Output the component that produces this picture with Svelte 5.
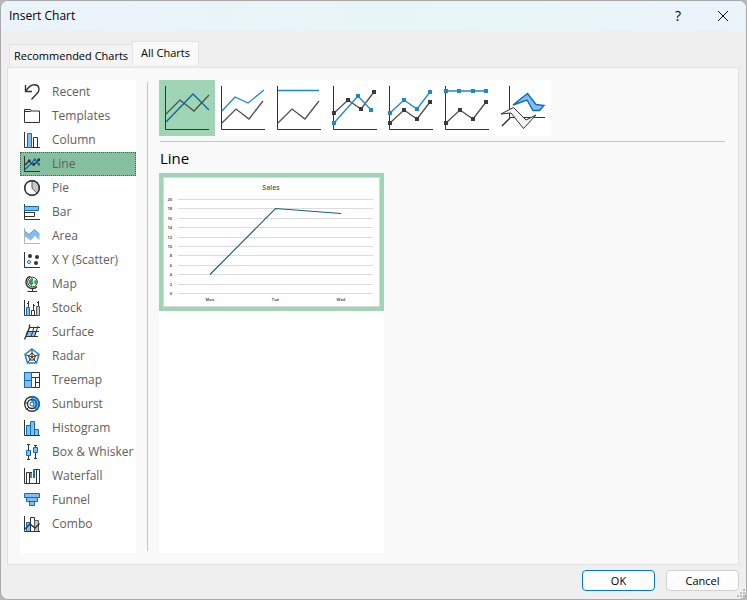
<script lang="ts">
  type Point = [number, number];

  type Series = {
    tone: 'dark' | 'blue';
    points: Point[];
  };

  type Subtype = {
    name: string;
    markers?: boolean;
    series: Series[];
  };

  const categories = [
    'Recent',
    'Templates',
    'Column',
    'Line',
    'Pie',
    'Bar',
    'Area',
    'X Y (Scatter)',
    'Map',
    'Stock',
    'Surface',
    'Radar',
    'Treemap',
    'Sunburst',
    'Histogram',
    'Box & Whisker',
    'Waterfall',
    'Funnel',
    'Combo'
  ];

  const rising: Point[] = [[7, 43], [21, 29], [34, 39], [48, 21]];
  const risingMarked: Point[] = [[7, 43], [21, 30], [34, 39], [47, 22]];

  const subtypes: Subtype[] = [
    {
      name: 'Line',
      series: [
        { tone: 'dark', points: [[7, 34], [21, 20], [35, 31], [50, 15]] },
        { tone: 'blue', points: [[7, 42], [34, 14], [50, 30]] }
      ]
    },
    {
      name: 'Stacked Line',
      series: [
        { tone: 'dark', points: rising },
        { tone: 'blue', points: [[7, 31], [20, 17], [33, 23], [49, 10]] }
      ]
    },
    {
      name: '100% Stacked Line',
      series: [
        { tone: 'dark', points: rising },
        { tone: 'blue', points: [[7, 10.5], [48, 10.5]] }
      ]
    },
    {
      name: 'Line with Markers',
      markers: true,
      series: [
        { tone: 'dark', points: [[7, 33], [21, 20], [34, 29], [47, 12]] },
        { tone: 'blue', points: [[7, 43], [31, 16], [44, 30]] }
      ]
    },
    {
      name: 'Stacked Line with Markers',
      markers: true,
      series: [
        { tone: 'dark', points: risingMarked },
        { tone: 'blue', points: [[7, 33], [21, 20], [34, 29], [47, 12]] }
      ]
    },
    {
      name: '100% Stacked Line with Markers',
      markers: true,
      series: [
        { tone: 'dark', points: risingMarked },
        { tone: 'blue', points: [[7, 11], [20, 11], [34, 11], [47, 11]] }
      ]
    },
    { name: '3-D Line', series: [] }
  ];

  const sales = [
    { day: 'Mon', value: 4 },
    { day: 'Tue', value: 18 },
    { day: 'Wed', value: 17 }
  ];
  const ticks = [0, 2, 4, 6, 8, 10, 12, 14, 16, 18, 20];

  let category = $state('Line');
  let subtype = $state('Line');
  let tab = $state('all');

  const toPath = (points: Point[]) => points.map((p) => p.join(',')).join(' ');
  const chartX = (i: number) => 47 + i * 65.5;
  const chartY = (v: number) => Math.round(116 - v * 4.7) + 0.5;
</script>

{#snippet icon(name: string)}
  <svg class="icon" viewBox="0 0 16 16" aria-hidden="true">
    {#if name === 'Recent'}
      <path class="ln heavy" d="M1.5 1v6.500H8M1.500 7.500C4 4 6 .8 10 .8c3 0 5 2 5 4.700 0 2-1 3-2.200 4.200L7.500 15.500" />
    {:else if name === 'Templates'}
      <path class="ln" d="M.5 14.500v-13h6l1 1.500h8v11.500zM.5 3.500h6l1-.5" />
    {:else if name === 'Column'}
      <path class="ln" d="M.5 0v15.500H16M9.500 15.500v-10h4v10" />
      <path class="bl" d="M3.500 1.500h4v14h-4z" />
    {:else if name === 'Line'}
      <path class="ln" d="M.5 0v15.500H16" />
      <path class="ln heavy" d="M1 9l4-4 4.500 4L15 4" />
      <path class="bs heavy" d="M1 13.500L11 3.500l4 4.500" />
      <path class="dot" d="M4 3.500h2.500V6H4zM8.500 7h2.500v2.500H8.500zM13.500 2.500H16V5h-2.500z" />
      <path class="bdot" d="M9.500 2.500H12V5H9.500zM13.500 7H16v2.500h-2.500zM6 6.500h2.500V9H6z" />
    {:else if name === 'Pie'}
      <circle class="ln white" cx="8" cy="8" r="7.300" />
      <path class="gr" d="M8 .7V8l5 5.300A7.300 7.300 0 0 0 8 .7z" />
      <circle class="ln heavy" cx="8" cy="8" r="7.300" />
    {:else if name === 'Bar'}
      <path class="ln" d="M.5 0v15.500H16M.5 8.500h10v4H.5" />
      <path class="bl" d="M.5 2.500h14v4H.5z" />
    {:else if name === 'Area'}
      <path class="axis-soft" d="M.5 0v15.500H16" />
      <path class="fill-bl" d="M.5 3L5 6.500l5.500-5L15.500 6v6L11 8l-4.500 4.500L.5 8z" />
      <path class="bs thin" d="M.5 3L5 6.500l5.500-5L15.500 6" />
    {:else if name === 'X Y (Scatter)'}
      <path class="ln" d="M.5 0v15.500H16" />
      <circle class="dot" cx="6" cy="4" r="2" />
      <circle class="dot" cx="13" cy="5" r="2" />
      <circle class="dot" cx="12" cy="11" r="2" />
      <circle class="bs white" cx="5" cy="10" r="1.500" />
    {:else if name === 'Map'}
      <circle class="ln white" cx="8.500" cy="6" r="4.800" />
      <path class="green" d="M5 4.500L8 2l1.500 1-1 2.500 1 1.500L7.500 10 5 7.500zM10.500 4.500l2-.5.500 2-1.500 2.500-1.500-1.500z" />
      <path class="ln heavy" d="M6.500.5C3.500 1 2 3.500 2 6.300c0 3.500 3 6.200 6.500 6.200 2 0 3.500-.7 4.500-2" />
      <path class="ln" d="M8.500 13v2M3.500 15.500h9.500" />
    {:else if name === 'Stock'}
      <path class="ln" d="M.5 0v15.500H16M4.500 1v6M3 3.500h1.500M9.500 4v6M9.500 5.500H11M14.500 1v5M13 2.500h1.500" />
      <path class="bl" d="M2.500 7.500h3v8h-3z" />
      <path class="ln white" d="M7.500 10.500h3v5h-3z" />
      <path class="gr" d="M12.500 6.500h3v9h-3z" />
    {:else if name === 'Surface'}
      <path class="fill-bl" d="M4 7.500h9l-2 5H2z" />
      <path class="ln heavy" d="M5.500.5v3L.5 15.500M3.500 7.500L2 12" />
      <path class="ln" d="M5 3.500h11M3.500 7.500h11.500M2 12.500h12M10 3.500L7 12.500M14 2l-3.500 10.500" />
    {:else if name === 'Radar'}
      <path class="ln" d="M8 1v8M1 6.500L8 9l7-2.500M3.500 15L8 9l4.500 6" />
      <path class="ln thick" d="M8 5l3.500 3-1.500 4H6L4.500 8z" />
      <path class="bs ring" d="M8 1l7 5.500-2.500 8.500h-9L1 6.500z" />
    {:else if name === 'Treemap'}
      <path class="bl" d="M.5.5h7v8h-7zM.5 8.500h7v7h-7z" />
      <path class="ln white" d="M7.500.5h8v15h-8zM7.500 5.500h8M11.500 5.500v10M11.500 10.500h4" />
      <path class="bs" d="M.5.5h7v15h-7z" />
    {:else if name === 'Sunburst'}
      <circle class="ln white heavy" cx="8" cy="8" r="7.300" />
      <path class="bl" d="M8 .7a7.300 7.300 0 0 1 4 13.200L8 8z" />
      <circle class="ln heavy" cx="8" cy="8" r="4.500" />
      <path class="bs heavy" d="M8 3.500a4.500 4.500 0 0 1 3 8M8 .7a7.300 7.300 0 0 1 4 13.200" />
      <circle class="bs white" cx="8" cy="8" r="2" />
      <path class="ln" d="M1 7h2.500M4.500 11.500L3 13" />
    {:else if name === 'Histogram'}
      <path class="bl" d="M2.500 5.500h4v10h-4zM6.500 1.500h4v14h-4zM10.500 9.500h4v6h-4z" />
      <path class="ln" d="M.5 0v15.500H16" />
    {:else if name === 'Box & Whisker'}
      <path class="ln" d="M3 .5h3M4.500.5v14.500M3 15.500h3M10 1.500h3M11.500 1.500v13M10 14.500h3" />
      <path class="bl" d="M2.500 6.500h4v5h-4zM9.500 3.500h4v5h-4z" />
    {:else if name === 'Waterfall'}
      <path class="ln white" d="M2.500 4.500h3v11h-3zM12.500 1.500h3v14h-3z" />
      <path class="gray" d="M6 4h2v6H6z" />
      <path class="bdot" d="M9 1h2v9H9z" />
      <path class="ln" d="M.5 0v15.500H16M5.500 4.500H8M11 1.500h4" />
    {:else if name === 'Funnel'}
      <path class="bl" d="M.5 1.500h15v4H.5zM2.500 5.500h11v4h-11zM5.500 9.500h5v4h-5z" />
    {:else if name === 'Combo'}
      <path class="bl" d="M2.500 6.500h4v9h-4z" />
      <path class="ln white" d="M6.500 1.500h4v14h-4z" />
      <path class="gr" d="M10.500 4.500h4v11h-4z" />
      <path class="ln" d="M.5 0v15.500H16" />
      <path class="ln heavy" d="M1 13l5-5 5 4 4.500-4.500" />
    {/if}
  </svg>
{/snippet}

<div class="dialog" role="dialog" aria-labelledby="title">
  <header>
    <h1 id="title">Insert Chart</h1>
    <button type="button" class="caption" aria-label="Help">?</button>
    <button type="button" class="caption" aria-label="Close">
      <svg class="close" viewBox="0 0 12 12" aria-hidden="true">
        <path d="M1 1l10 10M11 1L1 11" />
      </svg>
    </button>
  </header>

  <div class="body">
    <div class="tabs" role="tablist">
      <button type="button" role="tab" aria-selected={tab === 'recommended'} onclick={() => (tab = 'recommended')}>
        Recommended Charts
      </button>
      <button type="button" role="tab" aria-selected={tab === 'all'} onclick={() => (tab = 'all')}>
        All Charts
      </button>
    </div>

    <div class="panel">
      <nav class="categories" aria-label="Chart types">
        {#each categories as name (name)}
          <button
            type="button"
            class="category"
            class:selected={category === name}
            aria-pressed={category === name}
            onclick={() => (category = name)}
          >
            {@render icon(name)}
            {name}
          </button>
        {/each}
      </nav>

      <div class="divider"></div>

      <section class="detail">
        <div class="subtypes">
          {#each subtypes as item (item.name)}
            <button
              type="button"
              class="subtype"
              class:selected={subtype === item.name}
              aria-label={item.name}
              aria-pressed={subtype === item.name}
              onclick={() => (subtype = item.name)}
            >
              <svg viewBox="0 0 56 56" aria-hidden="true">
                {#if item.series.length}
                  <path class="ln" d="M6.500 6v43.500H50" />
                {:else}
                  <path class="ln" d="M14.500 6v31.500H50" />
                  <path class="bl heavy" d="M18 25l14.500-11.500 8.500 11 8 1-4.500 5h-6.500L32 20z" />
                  <path class="ln ribbon" d="M6 34l12.500-6.500L31 40l10-5-12.500 13.500L16 33z" />
                  <path class="ln heavy" d="M7 46l8-8" />
                {/if}
                {#each item.series as s}
                  <polyline class={s.tone} points={toPath(s.points)} />
                  {#if item.markers}
                    {#each s.points as [x, y]}
                      <rect class={`mark ${s.tone}`} x={x - 2} y={y - 2} width="4" height="4" />
                    {/each}
                  {/if}
                {/each}
              </svg>
            </button>
          {/each}
        </div>

        <h2>{subtype}</h2>

        <div class="previews">
          <button type="button" class="preview" aria-label="Sales, line chart">
            <svg viewBox="0 0 217 130" aria-hidden="true">
              <rect class="frame" x="0.5" y="0.5" width="216" height="129" />
              <text class="chart-title" x="108" y="13">Sales</text>
              {#each ticks as t (t)}
                <line class="grid" x1="15" x2="210" y1={chartY(t)} y2={chartY(t)} />
                <text class="tick end" x="9" y={chartY(t) + 1}>{t}</text>
              {/each}
              {#each sales as { day }, i (day)}
                <text class="tick" x={chartX(i)} y="124">{day}</text>
              {/each}
              <polyline class="trend" points={sales.map((s, i) => `${chartX(i)},${chartY(s.value)}`).join(' ')} />
            </svg>
          </button>
        </div>
      </section>
    </div>

    <footer>
      <button type="button" class="action default">OK</button>
      <button type="button" class="action">Cancel</button>
    </footer>
  </div>

  <svg class="grip" viewBox="0 0 9 9" aria-hidden="true">
    <path d="M6 0h2v2H6zM3 3h2v2H3zM6 3h2v2H6zM0 6h2v2H0zM3 6h2v2H3zM6 6h2v2H6z" />
  </svg>
</div>

<style>
  :global(body) {
    margin: 0;
    background: #b8b8b8;
  }

  * {
    box-sizing: border-box;
  }

  button {
    margin: 0;
    padding: 0;
    border: 0;
    background: none;
    color: inherit;
    font: inherit;
  }

  h1,
  h2 {
    margin: 0;
    font-weight: 400;
  }

  .dialog {
    position: relative;
    display: flex;
    flex-direction: column;
    min-height: 100vh;
    border: 1px solid #a9a9a9;
    border-radius: 8px;
    overflow: hidden;
    background: #efefef;
    color: #000;
    font: 12px/16px 'Open Sans', 'Segoe UI', sans-serif;
  }

  header {
    display: flex;
    align-items: center;
    height: 30px;
    padding: 0 8px;
    background: linear-gradient(90deg, #ebf3fb, #e8f5f6 50%, #e9f5f7 75%, #ebf3fb);
  }

  h1 {
    flex: 1;
    font-size: 12px;
  }

  .caption {
    display: grid;
    place-items: center;
    width: 30px;
    height: 30px;
    font-size: 14px;
  }

  .caption + .caption {
    margin-left: 15px;
  }

  .close {
    width: 12px;
    height: 12px;
    fill: none;
    stroke: #111;
  }

  .body {
    flex: 1;
    display: flex;
    flex-direction: column;
    padding: 10px 7px 8px 6px;
  }

  .tabs {
    display: flex;
    align-items: flex-end;
    height: 26px;
    padding: 0 2px 2px;
    font-size: 11px;
  }

  .tabs button {
    height: 21px;
    padding: 1px 4px 0;
    border: 1px solid #e4e4e4;
    border-width: 1px 0 0 1px;
    background: #f3f3f3;
    white-space: nowrap;
  }

  .tabs button[aria-selected='true'] {
    height: 24px;
    padding: 0 8px 1px;
    border-width: 1px 1px 0;
    background: #f9f9f9;
  }

  .panel {
    flex: 1;
    display: flex;
    gap: 11px;
    padding: 12px 12px 11px;
    border: 1px solid #e2e2e2;
    background: #f9f9f9;
  }

  .categories {
    flex: none;
    width: 116px;
    padding-bottom: 16px;
    background: #fff;
  }

  .category {
    display: flex;
    align-items: center;
    gap: 12px;
    width: 100%;
    height: 24px;
    padding: 0 3px;
    border: 1px solid transparent;
    color: #606060;
    text-align: left;
    white-space: nowrap;
  }

  .category.selected {
    border: 1px dotted #8a3a5c;
    background: #86bf9f;
  }

  .icon {
    flex: none;
    width: 16px;
    height: 16px;
  }

  .divider {
    width: 1px;
    margin: 2px 0;
    background: #c3c3c3;
  }

  .detail {
    flex: 1;
    display: flex;
    flex-direction: column;
    align-items: flex-start;
    min-width: 0;
  }

  .subtypes {
    display: flex;
    background: #fff;
  }

  .subtype {
    width: 56px;
    height: 56px;
  }

  .subtype.selected {
    background: #9fd5b5;
  }

  .subtype svg,
  .preview svg {
    display: block;
    width: 100%;
  }

  h2 {
    align-self: stretch;
    height: 32px;
    margin: 5px 1px 0;
    padding: 6px 0;
    border-top: 1px solid #c6c6c6;
    font-size: 15px;
    line-height: 20px;
  }

  .previews {
    flex: 1;
    width: 225px;
    background: #fff;
  }

  .preview {
    display: block;
    width: 100%;
    border: 4px solid #9fd5b5;
    background: #fff;
  }

  footer {
    display: flex;
    justify-content: flex-end;
    gap: 11px;
    padding-top: 5px;
    font-size: 11px;
  }

  .action {
    width: 73px;
    height: 21px;
    border: 1px solid #d0d0d0;
    border-radius: 4px;
    background: #fdfdfd;
  }

  .action.default {
    border-color: #0078d4;
  }

  .grip {
    position: absolute;
    right: 0;
    bottom: 1px;
    width: 9px;
    height: 9px;
    fill: #bdbdbd;
  }

  .ln {
    fill: none;
    stroke: #333;
  }

  .white {
    fill: #fff;
  }

  .gr {
    fill: #c8c8c8;
    stroke: #5a5a5a;
  }

  .bl {
    fill: #83beec;
    stroke: #0f6cb8;
  }

  .bs {
    fill: none;
    stroke: #0f6cb8;
  }

  .bs.white {
    fill: #fff;
  }

  .bs.ring {
    stroke: #1e7fc8;
    stroke-width: 1.5;
  }

  .heavy {
    stroke-width: 1.4;
  }

  .thin {
    stroke: #5b9bd0;
  }

  .fill-bl {
    fill: #83beec;
  }

  .axis-soft {
    fill: none;
    stroke: #b5b5b5;
  }

  .dot {
    fill: #333;
  }

  .gray {
    fill: #7a7a7a;
  }

  .bdot {
    fill: #0f6cb8;
  }

  .green {
    fill: #2f9e56;
  }

  .ribbon {
    fill: #f4f4f4;
  }

  polyline {
    fill: none;
    stroke-width: 1.3;
  }

  polyline.dark {
    stroke: #505050;
  }

  polyline.blue {
    stroke: #1e88cf;
  }

  .selected polyline.blue {
    stroke: #0f62a8;
  }

  .mark.dark {
    fill: #3b3b3b;
  }

  .mark.blue {
    fill: #1e88cf;
  }

  .frame {
    fill: #fff;
    stroke: #d9d9d9;
  }

  .grid {
    stroke: #dcdcdc;
  }

  polyline.trend {
    stroke: #156082;
    stroke-width: 1.1;
  }

  text {
    fill: #595959;
    font-family: 'Open Sans', 'Segoe UI', sans-serif;
    text-anchor: middle;
  }

  .chart-title {
    font-size: 7px;
    font-weight: 600;
  }

  .tick {
    font-size: 4px;
    font-weight: 700;
  }

  .tick.end {
    text-anchor: end;
  }
</style>
